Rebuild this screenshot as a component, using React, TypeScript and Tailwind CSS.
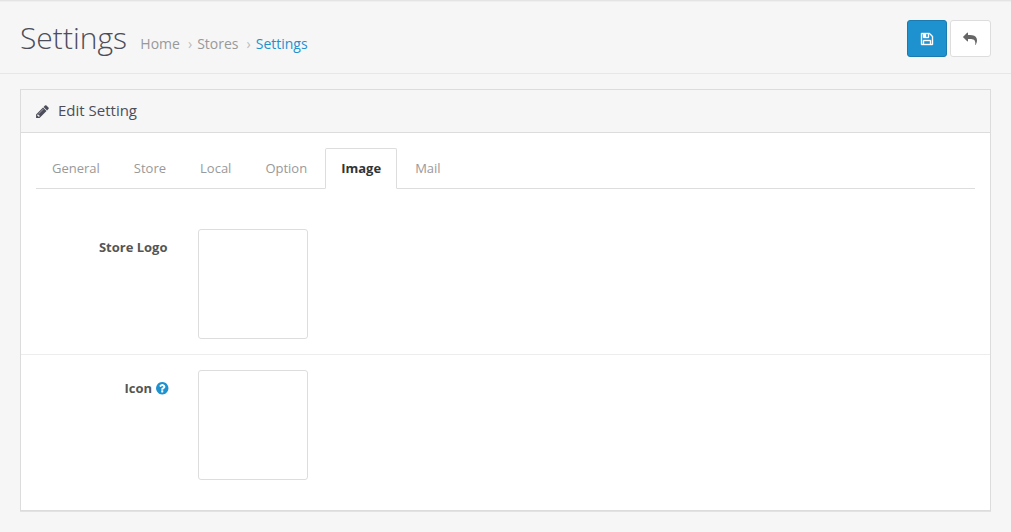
import React, { useState } from 'react';

interface IconProps {
  className?: string;
}

const SaveIcon: React.FC<IconProps> = ({ className }) => (
  <svg viewBox="0 0 1792 1792" fill="currentColor" stroke="currentColor" strokeWidth="50" className={className}>
    <path d="M512 1536h768v-384h-768v384zm896 0h128v-896q0-14-10-38.5t-20-34.5l-281-281q-10-10-34-20t-39-10v416q0 40-28 68t-68 28h-576q-40 0-68-28t-28-68v-416h-128v1280h128v-416q0-40 28-68t68-28h832q40 0 68 28t28 68v416zm-384-928v-320q0-13-9.5-22.5t-22.5-9.5h-192q-13 0-22.5 9.5t-9.5 22.5v320q0 13 9.5 22.5t22.5 9.5h192q13 0 22.5-9.5t9.5-22.5zm640 32v928q0 40-28 68t-68 28h-1344q-40 0-68-28t-28-68v-1344q0-40 28-68t68-28h928q40 0 88 20t76 48l280 280q28 28 48 76t20 88z" />
  </svg>
);

const ReplyIcon: React.FC<IconProps> = ({ className }) => (
  <svg viewBox="0 0 1792 1792" fill="currentColor" className={className}>
    <path
      transform="translate(1792 0) scale(-1 1)"
      d="M1792 640q0 26-19 45l-512 512q-19 19-45 19t-45-19-19-45v-256h-224q-98 0-175.5 6t-154 21.5-133 42.5-105.5 69.5-80 101-48.5 138.5-17.5 181q0 55 5 123 0 6 2.5 23.5t2.5 26.5q0 15-8.5 25t-23.5 10q-16 0-28-17-7-9-13-22t-13.5-30-10.5-24q-127-285-127-451 0-199 53-333 162-403 875-403h224v-256q0-26 19-45t45-19 45 19l512 512q19 19 19 45z"
    />
  </svg>
);

const PencilIcon: React.FC<IconProps> = ({ className }) => (
  <svg viewBox="0 0 1792 1792" fill="currentColor" className={className}>
    <path d="M491 1536l91-91-235-235-91 91v107h128v128h107zm523-928q0-22-22-22-10 0-17 7l-542 542q-7 7-7 17 0 22 22 22 10 0 17-7l542-542q7-7 7-17zm-54-192l416 416-832 832h-416v-416zm683 96q0 53-37 90l-166 166-416-416 166-165q36-38 90-38 53 0 91 38l235 234q37 39 37 91z" />
  </svg>
);

const HelpIcon: React.FC<IconProps> = ({ className }) => (
  <svg viewBox="0 0 1792 1792" fill="currentColor" className={className}>
    <path d="M1024 1376v-192q0-14-9-23t-23-9h-192q-14 0-23 9t-9 23v192q0 14 9 23t23 9h192q14 0 23-9t9-23zm256-672q0-88-55.5-163t-138.5-116-170-41q-243 0-371 213-15 24 8 42l132 100q7 6 19 6 16 0 25-12 53-68 86-92 34-24 86-24 48 0 85.5 26t37.5 59q0 38-20 61t-68 45q-63 28-115.5 86.5t-52.5 125.5v36q0 14 9 23t23 9h192q14 0 23-9t9-23q0-19 21.5-49.5t54.5-49.5q32-18 49-28.5t46-35 44.5-48 28-60.5 12.5-81zm384 192q0 209-103 385.5t-279.5 279.5-385.5 103-385.5-103-279.5-279.5-103-385.5 103-385.5 279.5-279.5 385.5-103 385.5 103 279.5 279.5 103 385.5z" />
  </svg>
);

const tabs = ['General', 'Store', 'Local', 'Option', 'Image', 'Mail'];

const App: React.FC = () => {
  const [activeTab, setActiveTab] = useState('Image');

  return (
    <div className="h-screen overflow-hidden bg-[#f6f6f6] font-['Open_Sans',sans-serif] text-[13px] leading-5 text-[#666]">
      <header className="flex h-[74px] items-start justify-between border-t border-b border-t-[#e4e4e4] border-b-[#e7e7e7] px-5 pt-[19px] shadow-[inset_0_1px_0_#efefef]">
        <div className="-mt-px flex items-baseline">
          <h1 className="text-[30px] leading-[38px] font-light text-[#4c4d5a]">Settings</h1>
          <nav className="ml-[13.4px] flex text-sm text-[#999]">
            <a href="#">Home</a>
            <span className="mr-[5px] ml-2 text-[#bbb]">›</span>
            <a href="#">Stores</a>
            <span className="mr-[5px] ml-2 text-[#bbb]">›</span>
            <a href="#" className="text-[#1e91cf]">Settings</a>
          </nav>
        </div>
        <div className="flex gap-[3px]">
          <button
            type="button"
            aria-label="Save"
            className="flex h-[37px] w-10 items-center justify-center rounded-[3px] border border-[#197bb0] bg-[#1e91cf] text-white"
          >
            <SaveIcon className="size-[14px]" />
          </button>
          <button
            type="button"
            aria-label="Cancel"
            className="flex h-[37px] w-[41px] items-center justify-center rounded-[3px] border border-[#ddd] bg-white pr-px text-[#666]"
          >
            <ReplyIcon className="size-[14px]" />
          </button>
        </div>
      </header>

      <main className="px-5 pt-[15px]">
        <section className="h-[422px] border border-[#dcdcdc] bg-white shadow-[0_1px_0_#e2e2e2]">
          <div className="flex h-[43px] items-center border-b border-[#dcdcdc] bg-[#f6f6f6] px-[14px] text-[#4c4d5a]">
            <PencilIcon className="size-[15px]" />
            <h3 className="ml-2 pb-[3px] text-[15px]">Edit Setting</h3>
          </div>

          <div className="px-[15px] pt-[15px]">
            <ul className="flex border-b border-[#ddd]">
              {tabs.map((tab) => (
                <li key={tab} className="mr-0.5 -mb-px">
                  <button
                    type="button"
                    onClick={() => setActiveTab(tab)}
                    className={`h-[41px] rounded-t-[2px] border px-[15px] pb-0.5 ${
                      tab === activeTab
                        ? 'border-[#ddd] border-b-white bg-white font-bold text-[#333]'
                        : 'border-transparent text-[#999]'
                    }`}
                  >
                    {tab}
                  </button>
                </li>
              ))}
            </ul>
          </div>

          <div className="mt-[25px] flex h-[141px] border-b border-[#ededed] pt-[15px]">
            <div className="w-[146.5px] pt-2 text-right font-bold text-[#555]">Store Logo</div>
            <div className="ml-[30.5px] size-[110px] rounded-[3px] border border-[#ddd] bg-white" />
          </div>
          <div className="flex pt-[15px]">
            <div className="flex w-[148.5px] items-start justify-end pt-2 font-bold text-[#555]">
              Icon
              <HelpIcon className="mt-[3px] ml-[3px] size-[14.5px] text-[#1e91cf]" />
            </div>
            <div className="ml-[28.5px] size-[110px] rounded-[3px] border border-[#ddd] bg-white" />
          </div>
        </section>
      </main>
    </div>
  );
};

export default App;
